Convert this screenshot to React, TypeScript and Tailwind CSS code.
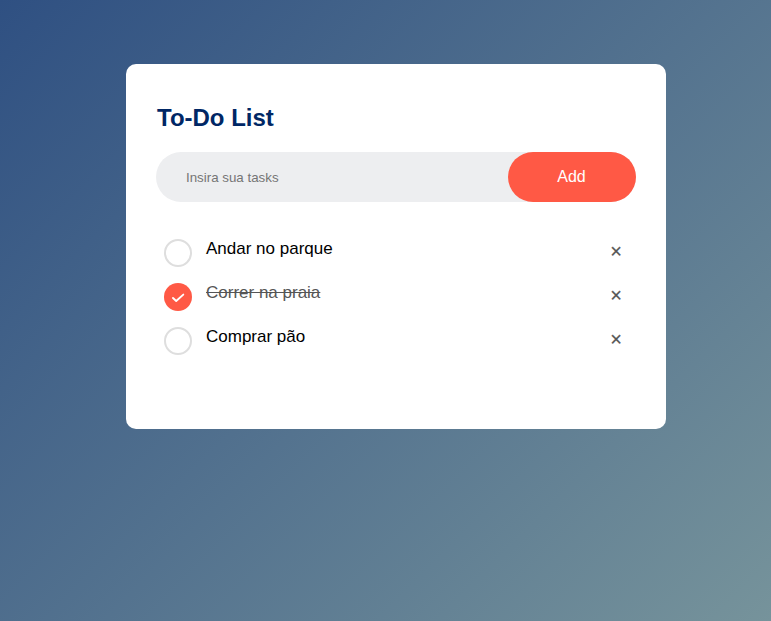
const tasks = [
  { text: "Andar no parque", done: false },
  { text: "Correr na praia", done: true },
  { text: "Comprar pão", done: false },
];

export default function App() {
  return (
    <main className="min-h-screen bg-[linear-gradient(135deg,#2f5082,#76939b)] pt-16 pl-[126px] font-['Liberation_Sans',Arial,sans-serif]">
      <section className="h-[365px] w-[540px] rounded-[10px] bg-white px-[30px] pt-10">
        <h1 className="mb-5 pl-px text-2xl leading-7 font-bold text-[#002765]">To-Do List</h1>
        <form className="flex h-[50px] items-center rounded-[30px] bg-[#edeef0] pl-5">
          <input className="min-w-0 flex-1 bg-transparent px-[10px] pt-3 pb-[10px] text-[13.333px] outline-none placeholder:text-[#757575]" placeholder="Insira sua tasks" />
          <button type="button" className="h-[50px] w-32 rounded-[40px] bg-[#ff5945] pr-px text-base text-white">Add</button>
        </form>
        <ul className="mt-[25px]">
          {tasks.map((task) => (
            <li key={task.text} className="flex h-11 pl-2 text-[17px]">
              <span className={`mt-3 flex size-7 shrink-0 items-center justify-center rounded-full ${task.done ? "bg-[#ff5945]" : "border-2 border-[#dedede]"}`}>
                {task.done && (
                  <svg viewBox="0 0 28 28" className="size-7" fill="none" stroke="white" strokeWidth="1.9" strokeLinecap="round" strokeLinejoin="round">
                    <path d="M9 15 L12.2 18 L19.3 11.6" />
                  </svg>
                )}
              </span>
              <span className={`ml-[14px] flex-1 pt-3 leading-5 ${task.done ? "text-[#555] line-through" : "text-black"}`}>{task.text}</span>
              <button type="button" aria-label="Remove" className="mt-[5px] h-[39px] w-10 text-[20px] leading-[39px] text-[#555] [-webkit-text-stroke:0.2px_#555]">
                ×
              </button>
            </li>
          ))}
        </ul>
      </section>
    </main>
  );
}
